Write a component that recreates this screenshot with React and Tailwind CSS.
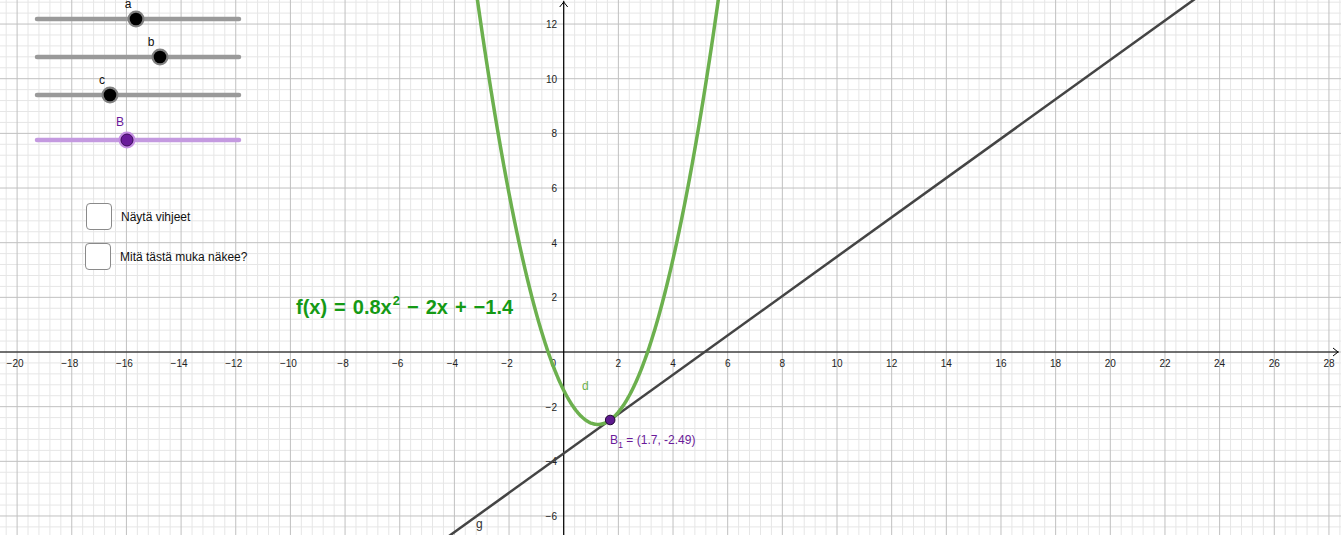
import React from "react";

const W = 1341;
const H = 535;
const OX = 563.7;
const OY = 352;
const S = 27.33;
const px = (x) => OX + x * S;
const py = (y) => OY - y * S;

function Grid() {
  const step = 0.4 * S;
  const minor = [];
  const major = [];
  for (let k = Math.ceil(-OX / step); OX + k * step <= W; k++) {
    const x = OX + k * step;
    (((k % 5) + 5) % 5 === 0 ? major : minor).push(
      <line key={"v" + k} x1={x} y1={0} x2={x} y2={H} />
    );
  }
  for (let k = Math.ceil(-(H - OY) / step); OY - k * step >= 0; k++) {
    const y = OY - k * step;
    (((k % 5) + 5) % 5 === 0 ? major : minor).push(
      <line key={"h" + k} x1={0} y1={y} x2={W} y2={y} />
    );
  }
  return (
    <>
      <g stroke="#e6e6e6" strokeWidth="1">{minor}</g>
      <g stroke="#c0c0c0" strokeWidth="1">{major}</g>
    </>
  );
}

function AxisLabels() {
  const xs = [];
  for (let v = -20; v <= 28; v += 2) {
    if (v === 0) continue;
    xs.push(
      <text key={"x" + v} x={px(v) + (v < 0 ? -2 : 0)} y={367} textAnchor="middle">
        {v < 0 ? "\u2212" + Math.abs(v) : v}
      </text>
    );
  }
  const ys = [];
  for (let v = -6; v <= 12; v += 2) {
    if (v === 0) continue;
    ys.push(
      <text key={"y" + v} x={557} y={py(v) + 4} textAnchor="end">
        {v < 0 ? "\u2212" + Math.abs(v) : v}
      </text>
    );
  }
  return (
    <g fontFamily="'Liberation Sans', Arial, sans-serif" fontSize="10" fill="#222">
      {xs}
      {ys}
      <text x={556} y={367} textAnchor="end">0</text>
    </g>
  );
}

function Parabola() {
  const f = (x) => 0.8 * x * x - 2 * x - 1.4;
  let d = "";
  for (let x = -3.4; x <= 5.9; x += 0.02) {
    d += (d ? " L " : "M ") + px(x).toFixed(2) + " " + py(f(x)).toFixed(2);
  }
  return <path d={d} fill="none" stroke="#6cb04e" strokeWidth="3.5" strokeLinecap="round" />;
}

function Tangent() {
  const g = (x) => 0.72 * x - 3.712;
  const x1 = -5, x2 = 24;
  return (
    <line x1={px(x1)} y1={py(g(x1))} x2={px(x2)} y2={py(g(x2))} stroke="#444" strokeWidth="2.5" />
  );
}

function Slider({ y, knob, label, labelX, purple }) {
  return (
    <g>
      <line
        x1={37}
        y1={y}
        x2={239}
        y2={y}
        stroke={purple ? "#c49ae0" : "#9a9a9a"}
        strokeWidth="4.5"
        strokeLinecap="round"
      />
      {purple ? (
        <>
          <circle cx={knob} cy={y} r={8.5} fill="#c58fe3" />
          <circle cx={knob} cy={y} r={6} fill="#6a1b9a" stroke="#3a0a5a" strokeWidth="1" />
        </>
      ) : (
        <>
          <circle cx={knob} cy={y} r={8.5} fill="#808080" />
          <circle cx={knob} cy={y} r={6.3} fill="#000" />
        </>
      )}
      <text
        x={labelX}
        y={y - (purple ? 14 : 11)}
        textAnchor="middle"
        fontFamily="'Liberation Sans', Arial, sans-serif"
        fontSize={purple ? 12 : 12}
        fill={purple ? "#6a1b9a" : "#111"}
      >
        {label}
      </text>
    </g>
  );
}

export default function App() {
  const bx = px(1.7);
  const by = py(-2.488);
  return (
    <div
      className="relative w-[1341px] h-[535px] overflow-hidden bg-white"
      style={{ fontFamily: "'Liberation Sans', Arial, sans-serif" }}
    >
      <svg width={W} height={H} className="absolute left-0 top-0 block">
        <Grid />
        {/* axes */}
        <line x1={0} y1={OY} x2={W - 2} y2={OY} stroke="#000" strokeWidth="1.2" />
        <line x1={OX} y1={1} x2={OX} y2={H} stroke="#000" strokeWidth="1.2" />
        <polyline points={`${W - 8},${OY - 4} ${W - 3},${OY} ${W - 8},${OY + 4}`} fill="none" stroke="#000" strokeWidth="1" />
        <polyline points={`${OX - 4},${7} ${OX},${2} ${OX + 4},${7}`} fill="none" stroke="#000" strokeWidth="1" />
        <AxisLabels />
        <Tangent />
        <Parabola />
        <circle cx={bx} cy={by} r={4.8} fill="#5e1a8e" stroke="#1e0630" strokeWidth="1" />
        <g fontFamily="'Liberation Sans', Arial, sans-serif" fontSize="12">
          <text x={610} y={444} fill="#6a1b9a">
            B<tspan fontSize="9" dy="4">1</tspan>
            <tspan dy="-4"> = (1.7, -2.49)</tspan>
          </text>
          <text x={582} y={390} fill="#6cb04e">d</text>
          <text x={476} y={528} fill="#333">g</text>
        </g>
        <Slider y={19} knob={136} label="a" labelX={128} />
        <Slider y={57} knob={160} label="b" labelX={151} />
        <Slider y={95} knob={110} label="c" labelX={102} />
        <Slider y={140} knob={127} label="B" labelX={120} purple />
      </svg>

      {/* checkboxes */}
      <div className="absolute left-[86px] top-[203px] flex items-center gap-[9px]">
        <div className="w-[26px] h-[27px] rounded-[4px] border-[1.5px] border-[#8a8a8a] bg-white"></div>
        <span className="text-[12px] text-[#111] leading-none">Näytä vihjeet</span>
      </div>
      <div className="absolute left-[85px] top-[243px] flex items-center gap-[9px]">
        <div className="w-[26px] h-[27px] rounded-[4px] border-[1.5px] border-[#8a8a8a] bg-white"></div>
        <span className="text-[12px] text-[#111] leading-none">Mitä tästä muka näkee?</span>
      </div>

      {/* function text */}
      <div className="absolute left-[296px] top-[297px] flex items-baseline text-[20px] font-bold text-[#159a15] leading-none whitespace-nowrap">
        <span>f(x)</span>
        <span className="mx-[7px]">=</span>
        <span>0.8x</span>
        <span className="text-[13px] relative -top-[9px] ml-[1px]">2</span>
        <span className="mx-[7px]">−</span>
        <span>2x</span>
        <span className="mx-[7px]">+</span>
        <span>−1.4</span>
      </div>
    </div>
  );
}
